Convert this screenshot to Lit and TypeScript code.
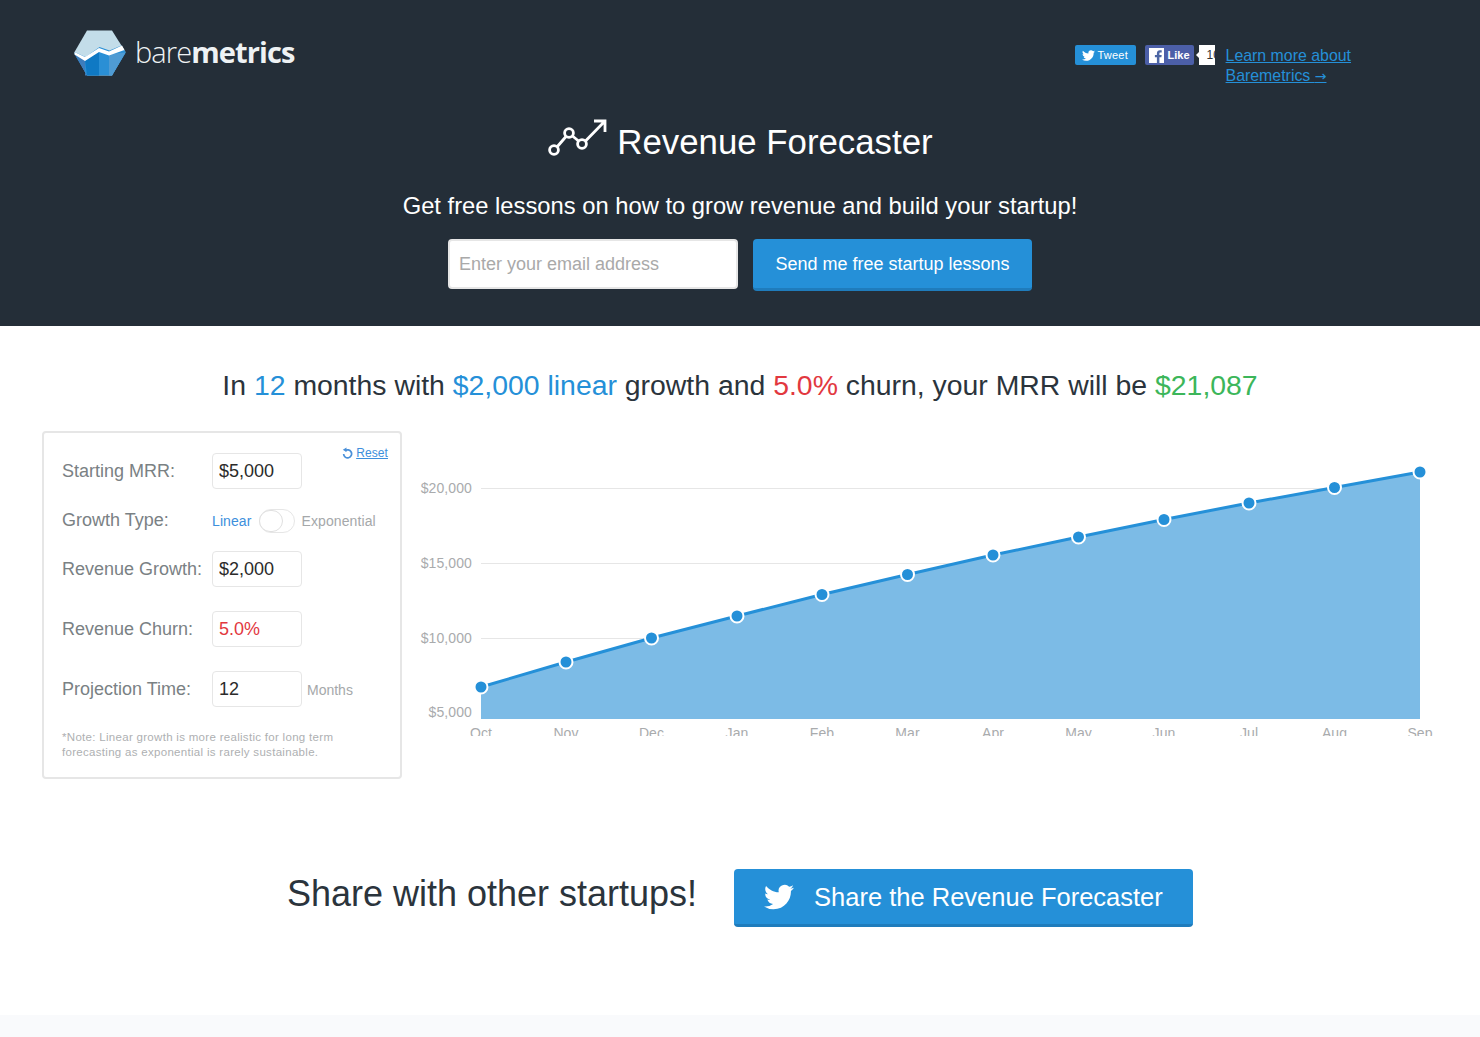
import { LitElement, html, css, svg } from 'lit';
import { customElement } from 'lit/decorators.js';

const BIRD =
  'M23.953 4.57a10 10 0 01-2.825.775 4.958 4.958 0 002.163-2.723c-.951.555-2.005.959-3.127 1.184a4.92 4.92 0 00-8.384 4.482C7.69 8.095 4.067 6.13 1.64 3.162a4.822 4.822 0 00-.666 2.475c0 1.71.87 3.213 2.188 4.096a4.904 4.904 0 01-2.228-.616v.06a4.923 4.923 0 003.946 4.827 4.996 4.996 0 01-2.212.085 4.936 4.936 0 004.604 3.417 9.867 9.867 0 01-6.102 2.105c-.39 0-.779-.023-1.17-.067a13.995 13.995 0 007.557 2.209c9.053 0 13.998-7.496 13.998-13.985 0-.21 0-.42-.015-.63A9.935 9.935 0 0024 4.59z';

// chart coordinates are relative to the svg box (page x - 410, page y - 431)
const POINTS: [string, number, number][] = [
  ['Oct', 71, 256],
  ['Nov', 156, 231],
  ['Dec', 241.5, 207],
  ['Jan', 327, 185],
  ['Feb', 412, 163.5],
  ['Mar', 497.5, 143.5],
  ['Apr', 583, 124],
  ['May', 668.5, 106],
  ['Jun', 754, 88.5],
  ['Jul', 839, 72],
  ['Aug', 924.5, 56.5],
  ['Sep', 1010, 41],
];
const BASE_Y = 288;
const GRID: [string, number][] = [
  ['$20,000', 57],
  ['$15,000', 132],
  ['$10,000', 207],
];

@customElement('app-root')
export class AppRoot extends LitElement {
  renderLogo() {
    return html`<svg class="logo" width="52" height="46" viewBox="0 0 52 46">
      <path d="M13 0.5H38L51.5 22 38 45.5H13L0.5 22z" fill="#c3dde9" />
      <path d="M0.5 22L11.5 27 25.5 17 35.5 20.5 47.5 15.5 51.5 22V23L38 45.5H13L0.5 24z" fill="#2a8fd5" />
      <path d="M0.5 24L11 30V45.5H13z" fill="#3d7dbd" />
      <path d="M11 30L25 21V45.5H13z" fill="#0f79c4" />
      <path d="M35 24L51.5 22.5 38 45.5H35z" fill="#4f9bd3" />
      <path d="M0.5 22L11 27 25 18 35 21.5 48 15.5 50.5 20 35 25.5 25 22 11 31 0.5 24.5z" fill="#fff" />
    </svg>`;
  }

  renderForecastIcon() {
    return html`<svg class="forecast" width="60" height="40" viewBox="0 0 60 40" fill="none" stroke="#fff" stroke-width="2.8">
      <circle cx="7" cy="31" r="4.4" />
      <circle cx="22" cy="14" r="4.4" />
      <circle cx="35" cy="25" r="4.4" />
      <path d="M10 28L19 17.5M25.5 17L31.5 22M38.5 22L57.5 2.5M47 2H58V13" />
    </svg>`;
  }

  renderChart() {
    const line = POINTS.map((p) => `${p[1]},${p[2]}`).join(' ');
    const first = POINTS[0];
    const last = POINTS[POINTS.length - 1];
    const area = `${first[1]},${BASE_Y} ${line} ${last[1]},${BASE_Y}`;
    return html`<svg class="chart" width="1070" height="305" viewBox="0 0 1070 305">
      ${GRID.map(
        ([label, y]) => svg`
          <line x1="71" x2="1010" y1=${y + 0.5} y2=${y + 0.5} stroke="#e6e6e6" />
          <text x="62" y=${y + 5} text-anchor="end">${label}</text>`
      )}
      <text x="62" y="286" text-anchor="end">$5,000</text>
      <polygon points=${area} fill="#7cbbe6" />
      <polyline points=${line} fill="none" stroke="#2590d8" stroke-width="3" />
      ${POINTS.map(
        ([label, x, y]) => svg`
          <circle cx=${x} cy=${y} r="6.5" fill="#2590d8" stroke="#fff" stroke-width="2" />
          <text x=${x} y="307" text-anchor="middle">${label}</text>`
      )}
    </svg>`;
  }

  render() {
    return html`
      <header>
        <div class="top">
          <div class="brand">
            ${this.renderLogo()}
            <span class="wordmark">bare<b>metrics</b></span>
          </div>
          <div class="social">
            <span class="tweet">
              <svg width="13" height="13" viewBox="0 0 24 24" fill="#fff"><path d=${BIRD} /></svg>
              Tweet
            </span>
            <span class="like">
              <span class="fb">
                <svg width="15" height="15" viewBox="0 0 15 15">
                  <rect width="15" height="15" fill="#fff" />
                  <path d="M10.4 15V9.2h2l.3-2.3h-2.3V5.5c0-.7.2-1.1 1.1-1.1h1.2V2.3c-.3 0-1-.1-1.8-.1-1.8 0-3 1.1-3 3.1v1.6h-2v2.3h2V15z" fill="#4c66a4" />
                </svg>
                Like
              </span>
              <span class="count">10</span>
            </span>
            <a class="learn" href="#">Learn more about<br />Baremetrics <span class="arrow">→</span></a>
          </div>
        </div>
        <h1>${this.renderForecastIcon()}<span>Revenue Forecaster</span></h1>
        <p class="lead">Get free lessons on how to grow revenue and build your startup!</p>
        <form class="signup">
          <input class="email" type="text" placeholder="Enter your email address" />
          <button class="send" type="button">Send me free startup lessons</button>
        </form>
      </header>

      <main>
        <h2>
          In <span class="blue">12</span> months with <span class="blue">$2,000 linear</span> growth and
          <span class="red">5.0%</span> churn, your MRR will be <span class="green">$21,087</span>
        </h2>
        <div class="workspace">
          <section class="panel">
            <a class="reset" href="#">
              <svg width="11" height="12" viewBox="0 0 11 12" fill="none" stroke="#4a90d9" stroke-width="1.7">
                <path d="M3 3.8A4 4 0 1 1 1.6 7" />
                <path d="M4.5 0.5V5L0.8 2.8z" fill="#4a90d9" stroke="none" />
              </svg>
              <span>Reset</span>
            </a>
            <div class="row first">
              <label>Starting MRR:</label>
              <input value="$5,000" />
            </div>
            <div class="row type">
              <label>Growth Type:</label>
              <div class="toggle">
                <span class="on">Linear</span>
                <span class="switch"><i></i></span>
                <span>Exponential</span>
              </div>
            </div>
            <div class="row">
              <label>Revenue Growth:</label>
              <input value="$2,000" />
            </div>
            <div class="row">
              <label>Revenue Churn:</label>
              <input class="churn" value="5.0%" />
            </div>
            <div class="row">
              <label>Projection Time:</label>
              <input value="12" />
              <span class="unit">Months</span>
            </div>
            <p class="note">
              *Note: Linear growth is more realistic for long term<br />
              forecasting as exponential is rarely sustainable.
            </p>
          </section>
          ${this.renderChart()}
        </div>

        <div class="share">
          <h3>Share with other startups!</h3>
          <button class="share-btn" type="button">
            <svg width="30" height="30" viewBox="0 0 24 24" fill="#fff"><path d=${BIRD} /></svg>
            Share the Revenue Forecaster
          </button>
        </div>
      </main>
      <footer></footer>
    `;
  }

  static styles = css`
    :host {
      display: block;
      font-family: 'Liberation Sans', Arial, sans-serif;
      color: #2b343c;
      background: #fff;
    }

    * {
      box-sizing: border-box;
    }

    header {
      height: 326px;
      background: #242e38;
      color: #fff;
      padding-top: 30px;
    }

    .top {
      display: flex;
      justify-content: space-between;
      align-items: flex-start;
      height: 78px;
      padding: 0 129px 0 74px;
    }

    .brand {
      display: flex;
      align-items: center;
      gap: 9px;
    }

    .logo {
      display: block;
    }

    .wordmark {
      font-family: 'Open Sans', sans-serif;
      font-weight: 300;
      font-size: 29px;
      letter-spacing: -0.9px;
      line-height: 44px;
      margin-bottom: 2px;
      color: #eef2f4;
    }

    .wordmark b {
      font-weight: 700;
    }

    .social {
      display: flex;
      align-items: flex-start;
      padding-top: 15px;
    }

    .tweet,
    .fb {
      display: inline-flex;
      align-items: center;
      height: 20px;
      border-radius: 2px;
      color: #fff;
      font-size: 11px;
    }

    .tweet {
      width: 61px;
      gap: 3px;
      padding-left: 7px;
      background: #2590d8;
      letter-spacing: 0.2px;
    }

    .like {
      position: relative;
      display: inline-flex;
      align-items: center;
      margin-left: 9px;
      width: 71px;
    }

    .fb {
      width: 49px;
      gap: 4px;
      padding-left: 4px;
      background: #4c5fa8;
      font-weight: 700;
    }

    .count {
      margin-left: 5px;
      width: 16px;
      height: 20px;
      background: #fff;
      color: #333;
      font-size: 12px;
      line-height: 20px;
      padding-left: 8px;
      overflow: hidden;
      white-space: nowrap;
    }

    .like::after {
      content: '';
      position: absolute;
      left: 51px;
      top: 6px;
      border: 4px solid transparent;
      border-right-color: #fff;
      border-left: 0;
    }

    .learn {
      margin-left: 10px;
      font-size: 15.9px;
      line-height: 20px;
      color: #2590d8;
      margin-top: 1px;
    }

    .arrow {
      font-family: 'DejaVu Sans', sans-serif;
      font-size: 14px;
    }

    h1 {
      display: flex;
      justify-content: center;
      align-items: center;
      gap: 10px;
      margin: 14px 0 0;
      height: 40px;
      font-size: 34.8px;
      font-weight: 400;
    }

    .forecast {
      margin-bottom: 6px;
    }

    .lead {
      margin: 29px 0 0;
      text-align: center;
      font-size: 23.75px;
      line-height: 30px;
    }

    .signup {
      display: flex;
      justify-content: center;
      align-items: flex-start;
      gap: 15px;
      margin-top: 18px;
    }

    .email {
      width: 290px;
      height: 50px;
      border: 2px solid #e6e6e6;
      border-radius: 4px;
      padding: 0 9px;
      background: #fff;
      font: 18px 'Liberation Sans', Arial, sans-serif;
      outline: none;
    }

    .email::placeholder {
      color: #a9a9a9;
      opacity: 1;
    }

    .send,
    .share-btn {
      border: 0;
      border-radius: 4px;
      background: #2590d8;
      color: #fff;
      font-family: inherit;
    }

    .send {
      width: 279px;
      height: 52px;
      border-bottom: 3px solid #1f7cbc;
      font-size: 18px;
      padding: 2px 0 0;
    }

    h2 {
      margin: 0;
      padding-top: 41px;
      height: 105px;
      text-align: center;
      font-size: 28.4px;
      line-height: 36px;
      font-weight: 400;
    }

    .blue {
      color: #2590d8;
    }

    .red {
      color: #e2383f;
    }

    .green {
      color: #3cb65a;
    }

    .workspace {
      display: flex;
      align-items: flex-start;
      gap: 8px;
      padding-left: 42px;
    }

    .panel {
      position: relative;
      width: 360px;
      height: 348px;
      border: 2px solid #e6e6e6;
      border-radius: 4px;
      padding: 20px 18px 0;
    }

    .reset {
      position: absolute;
      top: 13px;
      right: 12px;
      display: flex;
      align-items: center;
      gap: 3px;
      color: #3d8fdc;
      font-size: 12px;
      letter-spacing: 0.1px;
    }

    .row {
      display: flex;
      align-items: center;
      height: 36px;
      margin-bottom: 24px;
    }

    .row.first,
    .row.type {
      margin-bottom: 13px;
    }

    label {
      width: 150px;
      font-size: 18px;
      color: #7a8184;
    }

    .row input {
      width: 90px;
      height: 36px;
      border: 1px solid #e6e6e6;
      border-radius: 4px;
      padding: 0 6px;
      font: 18px 'Liberation Sans', Arial, sans-serif;
      color: #2b2b2b;
      outline: none;
    }

    .row input.churn {
      color: #e2383f;
    }

    .toggle {
      display: flex;
      align-items: center;
      gap: 7px;
      font-size: 14px;
      letter-spacing: 0.1px;
      color: #a5a8aa;
      padding-top: 2px;
    }

    .toggle .on {
      color: #3d8fdc;
    }

    .switch {
      display: block;
      width: 36px;
      height: 24px;
      border: 1px solid #e6e6e6;
      border-radius: 12px;
      background: #fff;
    }

    .switch i {
      display: block;
      width: 24px;
      height: 22px;
      border: 1px solid #e0e0e0;
      border-radius: 12px;
      margin-left: -1px;
      background: #fff;
    }

    .unit {
      margin-left: 5px;
      font-size: 14px;
      color: #a5a8aa;
      padding-top: 2px;
    }

    .note {
      margin: -1px 0 0;
      font-size: 11.5px;
      line-height: 15px;
      letter-spacing: 0.3px;
      color: #aeb0b2;
    }

    .chart {
      display: block;
      flex: none;
    }

    .chart text {
      font-size: 14px;
      letter-spacing: 0.1px;
      fill: #a9abad;
    }

    .share {
      display: flex;
      justify-content: center;
      align-items: center;
      gap: 37px;
      margin-top: 90px;
      height: 58px;
    }

    h3 {
      margin: 0 0 9px;
      font-size: 36px;
      font-weight: 400;
    }

    .share-btn {
      display: flex;
      align-items: center;
      gap: 20px;
      width: 459px;
      height: 58px;
      padding: 1px 0 0 30px;
      border-bottom: 3px solid #1f7cbc;
      font-size: 25.5px;
    }

    footer {
      height: 22px;
      margin-top: 88px;
      background: #f9fafc;
    }
  `;
}
